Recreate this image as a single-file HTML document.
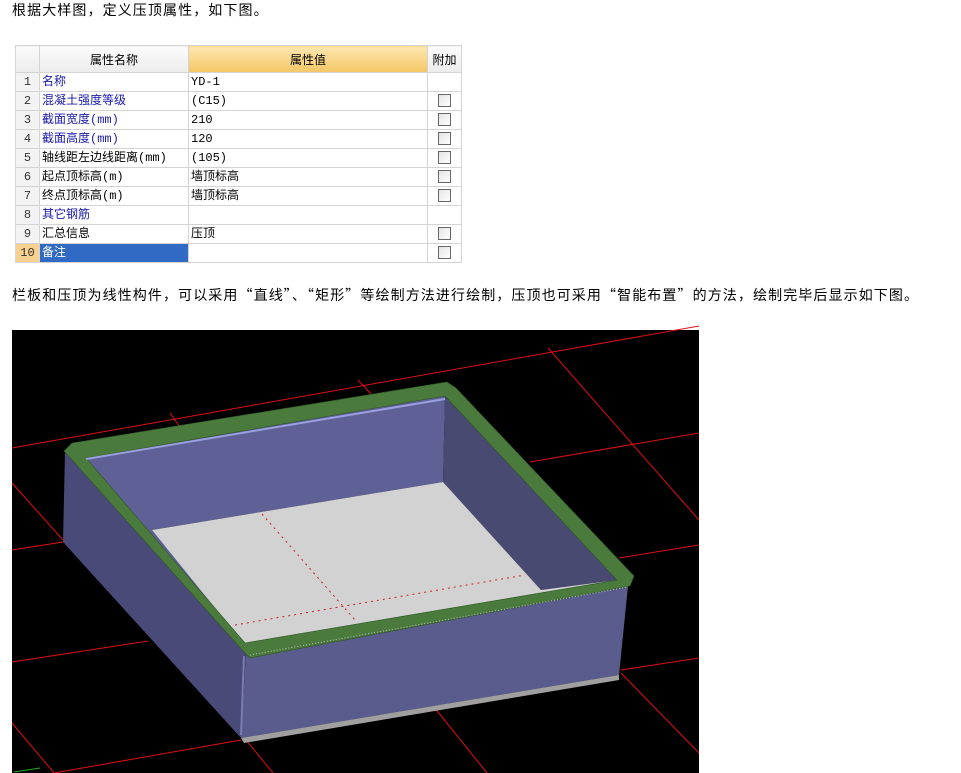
<!DOCTYPE html>
<html><head><meta charset="utf-8"><style>
body{margin:0;background:#fff;width:961px;height:773px;overflow:hidden;position:relative;font-family:"Noto Sans CJK SC",sans-serif;}
.p{position:absolute;left:12px;font-size:14px;letter-spacing:1.1px;color:#000;white-space:nowrap;line-height:18px;font-family:"Noto Sans CJK SC",sans-serif}
table{position:absolute;left:15px;top:45px;border-collapse:collapse;font-size:12px;font-family:"Liberation Mono","Noto Sans CJK SC",monospace;}
td{border:1px solid #d4d4d4;height:18px;padding:0 2px;white-space:nowrap;line-height:18px}
th{height:24px;font-weight:normal;border:1px solid #d4d4d4;background:linear-gradient(#fbfbfb,#ececec);font-size:12px;font-family:"Liberation Sans","Noto Sans CJK SC",sans-serif}
th.o{background:linear-gradient(#fde7b0,#f5c766)}
td.n{background:#f3f3f3;text-align:center;color:#333;width:19px;padding:0}
.b{color:#1a1aa8}
.cb{display:inline-block;width:11px;height:11px;border:1px solid #666;background:linear-gradient(135deg,#e4e4e4,#fff);vertical-align:middle}
td.c{text-align:center;padding:0}
</style></head><body>
<div class="p" style="top:1px">根据大样图，定义压顶属性，如下图。</div>
<table>
<tr><th style="width:21px"></th><th style="width:146px">属性名称</th><th class="o" style="width:236px">属性值</th><th style="width:31px">附加</th></tr>
<tr><td class="n">1</td><td class="b">名称</td><td>YD-1</td><td class="c"></td></tr>
<tr><td class="n">2</td><td class="b">混凝土强度等级</td><td>(C15)</td><td class="c"><span class="cb"></span></td></tr>
<tr><td class="n">3</td><td class="b">截面宽度(mm)</td><td>210</td><td class="c"><span class="cb"></span></td></tr>
<tr><td class="n">4</td><td class="b">截面高度(mm)</td><td>120</td><td class="c"><span class="cb"></span></td></tr>
<tr><td class="n">5</td><td>轴线距左边线距离(mm)</td><td>(105)</td><td class="c"><span class="cb"></span></td></tr>
<tr><td class="n">6</td><td>起点顶标高(m)</td><td>墙顶标高</td><td class="c"><span class="cb"></span></td></tr>
<tr><td class="n">7</td><td>终点顶标高(m)</td><td>墙顶标高</td><td class="c"><span class="cb"></span></td></tr>
<tr><td class="n">8</td><td class="b">其它钢筋</td><td></td><td class="c"></td></tr>
<tr><td class="n">9</td><td>汇总信息</td><td>压顶</td><td class="c"><span class="cb"></span></td></tr>
<tr><td class="n" style="background:#f8d090">10</td><td style="background:#316ac5;color:#fff">备注</td><td></td><td class="c"><span class="cb"></span></td></tr>
</table>
<div class="p" style="top:286px">栏板和压顶为线性构件，可以采用“直线”、“矩形”等绘制方法进行绘制，压顶也可采用“智能布置”的方法，绘制完毕后显示如下图。</div>
<svg style="position:absolute;left:0;top:0" width="961" height="773">
<rect x="12" y="330" width="687" height="443" fill="#000"/>
<g stroke="#e01010" stroke-width="1" fill="none">
<line x1="12" y1="448" x2="699" y2="326"/>
<line x1="530" y1="462" x2="699" y2="433"/>
<line x1="619" y1="558" x2="699" y2="545"/>
<line x1="12" y1="550" x2="63" y2="542"/>
<line x1="12" y1="662" x2="148" y2="641"/>
<line x1="621" y1="670" x2="699" y2="658"/>
<line x1="54" y1="773" x2="241" y2="740"/>
<line x1="548" y1="348" x2="699" y2="520"/>
<line x1="170" y1="413" x2="180" y2="427"/>
<line x1="358" y1="380" x2="371" y2="394"/>
<line x1="12" y1="483" x2="63" y2="540"/>
<line x1="12" y1="723" x2="54" y2="773"/>
<line x1="434" y1="707" x2="487" y2="773"/>
<line x1="621" y1="673" x2="699" y2="753"/>
<line x1="246" y1="740" x2="273" y2="773"/>
</g>
<line x1="14" y1="772" x2="40" y2="768" stroke="#2a2" />
<polygon points="65,452 86,458 246,650 241,738 63,542" fill="#4a4a78"/>
<polygon points="86,458 445,396 443,482 152,530 245,643 80,460" fill="#5f6096"/>
<polygon points="445,396 617,580 541,590 443,482" fill="#494a72"/>
<polygon points="152,530 443,482 541,590 617,580 245,645" fill="#d2d2d2"/>
<g stroke="#d02020" stroke-width="1" stroke-dasharray="2,4" fill="none">
<line x1="262" y1="514" x2="355" y2="620"/>
<line x1="235" y1="625" x2="525" y2="575"/>
</g>
<polygon points="246,652 628,586 619,675 241,738" fill="#5b5c8e"/>
<polygon points="241,738 619,675 619,680 244,743" fill="#a0a0a0"/>
<line x1="244" y1="656" x2="241" y2="735" stroke="#7a7cb0" stroke-width="2"/>
<path fill-rule="evenodd" fill="#4a7a3c" stroke="#2f5527" stroke-width="0.6"
 d="M64,451 L72,443 L447,382 L456,388 L634,576 L630,586 L250,658 L244,652 Z M86,458 L445,396 L617,580 L245,643 Z"/>
<line x1="86" y1="459" x2="445" y2="399" stroke="#9aa0dd" stroke-width="2"/>
<line x1="250" y1="655" x2="628" y2="587" stroke="#bbb" stroke-width="1" stroke-dasharray="1,2"/>
</svg>
</body></html>
